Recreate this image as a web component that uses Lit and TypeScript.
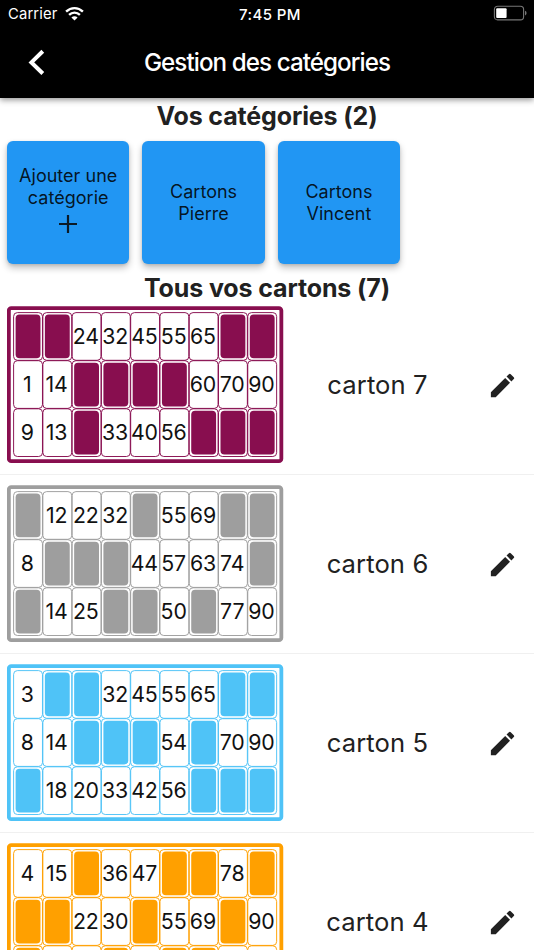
import { LitElement, html, svg, css } from "lit";
import { customElement, property } from "lit/decorators.js";

/* A number is printed, 0 is a filled square, null is an open square. */
type Square = number | null;
type Carton = { name: string; color: string; rows: Square[][] };

const CARTONS: Carton[] = [
  { name: "carton 7", color: "#880e4f", rows: [[0, 0, 24, 32, 45, 55, 65, 0, 0], [1, 14, 0, 0, 0, 0, 60, 70, 90], [9, 13, 0, 33, 40, 56, 0, 0, 0]] },
  { name: "carton 6", color: "#9e9e9e", rows: [[0, 12, 22, 32, 0, 55, 69, 0, 0], [8, 0, 0, 0, 44, 57, 63, 74, 0], [0, 14, 25, 0, 0, 50, 0, 77, 90]] },
  { name: "carton 5", color: "#4fc3f7", rows: [[3, 0, 0, 32, 45, 55, 65, 0, 0], [8, 14, 0, 0, 0, 54, 0, 70, 90], [0, 18, 20, 33, 42, 56, 0, 0, 0]] },
  { name: "carton 4", color: "#ffa000", rows: [[4, 15, 0, 36, 47, 0, 0, 78, 0], [0, 0, 22, 30, 0, 55, 69, 0, 90], [0, null, null, 0, null, 0, 0, null, null]] },
];

const COL = 29.27;
const ROW = 48.1;

@customElement("loto-carton")
class LotoCarton extends LitElement {
  @property({ attribute: false }) carton!: Carton;

  static styles = css`
    :host { display: block; position: relative; width: 277px; height: 158px; flex: none; }
    .frame { position: absolute; inset: 0; display: block; }
    .grid {
      position: relative; display: grid; box-sizing: border-box;
      grid-template-columns: repeat(9, 29.27px); grid-template-rows: repeat(3, 48.1px);
      padding: 5.6px 0 0 5.7px;
    }
    .cell {
      display: flex; align-items: center; justify-content: center;
      font-size: 21.3px; line-height: 26px; letter-spacing: -0.15px; color: #111; white-space: nowrap;
    }
  `;

  render() {
    const { color, rows } = this.carton;
    return html`
      <svg class="frame" width="277" height="158" viewBox="0 0 277 158">
        <rect x="1.85" y="2.05" width="272.5" height="153.1" rx="2.4" fill="#fff" stroke=${color} stroke-width="3.8" />
        ${rows.map((row, r) => row.map((n, c) => {
          const x = 6.4 + c * COL;
          const y = 6.4 + r * ROW;
          return svg`
            <rect x=${x + 0.2} y=${y + 0.2} width=${COL - 0.4} height=${ROW - 0.4} rx="3.8" fill="none" stroke=${color} stroke-width="0.95" />
            ${n === 0 ? svg`<rect x=${x + 2.2} y=${y + 2.2} width=${COL - 4.4} height=${ROW - 4.4} rx="4" fill=${color} />` : null}`;
        }))}
      </svg>
      <div class="grid">
        ${rows.flat().map((n) => html`<span class="cell">${n || ""}</span>`)}
      </div>
    `;
  }
}

@customElement("app-root")
class AppRoot extends LitElement {
  static styles = css`
    :host {
      display: flex; flex-direction: column; width: 534px; height: 950px; overflow: hidden;
      background: #fff; color: #212121; font-family: Inter, "Liberation Sans", sans-serif;
    }
    .bar {
      flex: none; height: 98px; background: #000; color: #fff; position: relative;
      box-shadow: 0 2px 6px rgba(0, 0, 0, 0.42);
    }
    .status {
      display: grid; grid-template-columns: 1fr auto 1fr; align-items: center;
      height: 28px; padding: 0 7px 0 8px; font-size: 14.8px;
    }
    .carrier { display: flex; align-items: center; gap: 7px; letter-spacing: 0.15px; }
    .carrier svg { margin-top: -2px; }
    .time { font-weight: 500; letter-spacing: 0.4px; font-size: 15px; padding-left: 5px; }
    .battery { justify-self: end; display: block; margin-top: -2px; }
    .nav { display: grid; grid-template-columns: 72px 1fr 72px; align-items: center; height: 70px; }
    .back { display: block; margin-left: 27px; }
    .title { text-align: center; font-size: 24.2px; font-weight: 500; letter-spacing: -0.93px; white-space: nowrap; margin-top: -1px; }
    h2 { margin: 0; flex: none; text-align: center; font-weight: 700; font-size: 25px; letter-spacing: -0.13px; line-height: 30px; white-space: nowrap; }
    .h-cat { padding-top: 3px; height: 40px; }
    .h-all { height: 30px; padding-top: 9px; }
    .tiles { display: flex; flex: none; gap: 13px; padding: 0 7px; }
    .tile {
      width: 122.4px; height: 123px; border-radius: 6px; background: #2196f3; color: rgba(0, 0, 0, 0.87);
      display: flex; flex-direction: column; align-items: center; justify-content: center; text-align: center;
      font-size: 18px; line-height: 22px; letter-spacing: 0.02px; white-space: pre-line;
      box-shadow: 0 4px 7px rgba(0, 0, 0, 0.24), 0 1px 3px rgba(0, 0, 0, 0.12);
    }
    .tile svg { display: block; margin: 5px 0 6px; }
    .list { flex: 1; min-height: 0; overflow: hidden; margin-top: 3px; }
    .row {
      display: flex; align-items: flex-start; box-sizing: border-box; height: 179px;
      padding-left: 7px; border-bottom: 1px solid #f0f0f0;
    }
    .row + .row { padding-top: 10px; }
    .row:first-child { height: 169px; }
    .name { flex: 1; text-align: center; padding-right: 16px; font-size: 25.6px; line-height: 32px; margin-top: 63px; letter-spacing: 0.1px; }
    .edit { flex: none; width: 31px; height: 31px; margin: 64px 16px 0 0; }
  `;

  render() {
    return html`
      <header class="bar">
        <div class="status">
          <div class="carrier">
            <span>Carrier</span>
            <svg width="19" height="15" viewBox="0 0 19 15">
              <g fill="none" stroke="#fff" stroke-width="2.4">
                <path d="M1.1 5.6C6 .9 13 .9 17.9 5.6" />
                <path d="M4.1 8.9C7.2 5.9 11.8 5.9 14.9 8.9" />
              </g>
              <path d="M6.4 11.4C8.2 9.7 10.8 9.7 12.6 11.4L9.5 14.4Z" fill="#fff" />
            </svg>
          </div>
          <span class="time">7:45 PM</span>
          <svg class="battery" width="34" height="16" viewBox="0 0 34 16">
            <rect x="1.4" y="1.3" width="29.2" height="13.6" rx="3.2" fill="none" stroke="#777" stroke-width="1.1" />
            <rect x="3.2" y="3.2" width="10.4" height="9.8" rx="1" fill="#fff" />
            <path d="M32 5.8Q33.6 6.3 33.6 8.1T32 10.4Z" fill="#777" />
          </svg>
        </div>
        <div class="nav">
          <svg class="back" width="20" height="28" viewBox="0 0 20 28">
            <path d="M15.8 2.3L4.4 13.4L15.8 24.500" fill="none" stroke="#fff" stroke-width="4" />
          </svg>
          <div class="title">Gestion des catégories</div>
        </div>
      </header>
      <h2 class="h-cat">Vos catégories (2)</h2>
      <div class="tiles">
        <div class="tile">
          <span>${"Ajouter une\ncatégorie"}</span>
          <svg width="20" height="20" viewBox="0 0 20 20"><path d="M10 1V19M1 10H19" stroke="#0b1a26" stroke-width="2.2" /></svg>
        </div>
        <div class="tile">${"Cartons\nPierre"}</div>
        <div class="tile">${"Cartons\nVincent"}</div>
      </div>
      <h2 class="h-all">Tous vos cartons (7)</h2>
      <div class="list">
        ${CARTONS.map((c) => html`
          <div class="row">
            <loto-carton .carton=${c}></loto-carton>
            <div class="name">${c.name}</div>
            <svg class="edit" viewBox="0 0 24 24">
              <path fill="#212121" d="M3 17.25V21h3.75L17.81 9.94l-3.75-3.75L3 17.25zM20.71 7.04a1 1 0 0 0 0-1.41l-2.34-2.34a1 1 0 0 0-1.41 0l-1.83 1.83 3.75 3.75 1.83-1.83z" />
            </svg>
          </div>`)}
      </div>
    `;
  }
}
